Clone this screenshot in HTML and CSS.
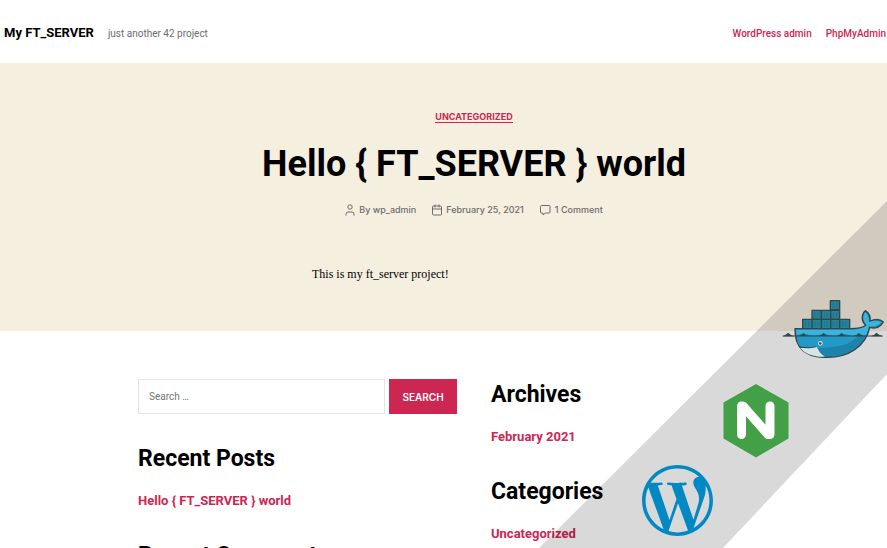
FILE: index.html
```html
<!DOCTYPE html>
<html lang="en">
<head>
<meta charset="utf-8">
<meta name="viewport" content="width=device-width, initial-scale=1">
<title>My FT_SERVER</title>
<link rel="stylesheet" href="styles.css">
</head>
<body>
<header class="site-header">
  <div class="brand">
    <a class="brand-name" href="#">My FT_SERVER</a>
    <span class="tagline">just another 42 project</span>
  </div>
  <nav class="site-nav">
    <a href="#">WordPress admin</a>
    <a href="#">PhpMyAdmin</a>
  </nav>
</header>
<main>
  <article class="post">
    <a class="category" href="#">UNCATEGORIZED</a>
    <h1>Hello { FT_SERVER } world</h1>
    <ul class="meta">
      <li><svg width="10" height="12" viewBox="0 0 10 12" aria-hidden="true"><circle cx="5" cy="3" r="2.2"/><path d="M1 11.5V10a2 2 0 0 1 2-2h4a2 2 0 0 1 2 2v1.500"/></svg>By wp_admin</li>
      <li><svg width="10" height="12" viewBox="0 0 10 12" aria-hidden="true"><rect x=".5" y="2" width="9" height="9" rx="1"/><path d="M.5 5h9M3 .5v3M7 .5v3"/></svg>February 25, 2021</li>
      <li><svg width="11" height="12" viewBox="0 0 11 12" aria-hidden="true"><path d="M1.500 1.500h7.500a1 1 0 0 1 1 1v5.500a1 1 0 0 1-1 1H5.500L3 11V9H1.500a1 1 0 0 1-1-1V2.500a1 1 0 0 1 1-1z"/></svg>1 Comment</li>
    </ul>
    <p class="post-text">This is my ft_server project!</p>
  </article>
  <div class="widgets">
    <div class="column">
      <form class="search">
        <input type="search" aria-label="Search" placeholder="Search …">
        <button type="submit">SEARCH</button>
      </form>
      <section>
        <h2>Recent Posts</h2>
        <a href="#">Hello { FT_SERVER } world</a>
      </section>
      <section>
        <h2>Recent Comments</h2>
      </section>
    </div>
    <div class="column">
      <section>
        <h2>Archives</h2>
        <a href="#">February 2021</a>
      </section>
      <section>
        <h2>Categories</h2>
        <a href="#">Uncategorized</a>
      </section>
    </div>
  </div>
</main>
<svg class="ribbon" width="348" height="347" viewBox="0 0 348 347" aria-hidden="true">
  <path d="M348 0V173L184 347H0z" fill="#000" fill-opacity=".15"/>
  <svg x="231" y="84" width="117" height="90" viewBox="0 0 351 270">
    <g stroke="#364548" stroke-width="4" stroke-linejoin="round">
      <path fill="#248299" d="M181 47h28v28h-28zM126 76h83v27h-83zM98 103h141v29H98z"/>
      <path fill="none" d="M181 75h28M126 103h83M126 103v28M154 76v55M182 76v55M209 103v28"/>
      <path stroke="#1d6f84" stroke-width="2" fill="none" d="M190 53v17M200 53v17M135 82v16M144 82v16M163 82v16M172 82v16M190 82v16M200 82v16M107 109v17M116 109v17M135 109v17M144 109v17M163 109v17M172 109v17M190 109v17M200 109v17M218 109v17M228 109v17"/>
      <path fill="#1c83aa" d="M75 131H240C264 131 279 128 287 121C273 107 274 88 286 77C297 84 302 96 300 108C315 102 330 102 340 111C332 127 315 132 299 127C294 155 278 178 253 195C228 212 195 219 160 217C105 214 74 187 75 131z"/>
    </g>
    <path fill="#3ab3dd" d="M78 134H245C268 133 282 129 290 121C277 106 278 91 286 81C294 88 298 98 297 112C312 106 326 106 335 112C326 123 310 127 297 123C294 134 292 143 287 151C276 153 271 145 266 145C258 151 248 154 240 151L215 145C199 155 182 153 161 145C140 155 120 152 101 145L80 151z"/>
    <path fill="#2498c6" d="M80 153H264C245 177 207 187 151 189L89 184Q81 171 80 153z"/>
    <path fill="#d5e7e5" d="M90 188C109 190 126 190 140 184C145 198 153 209 165 215C132 216 105 207 90 188z"/>
    <path fill="none" stroke="#364548" stroke-width="3" d="M38 153H338M88 187Q120 191 140 185"/>
    <path fill="#364548" d="M38 154Q50 148 54 143Q62 151 74 154zM88 153Q99 149 101 144Q105 151 114 153zM148 153Q158 149 161 144Q165 151 175 153zM202 153Q212 149 214 144Q219 151 228 153zM252 153Q263 150 266 144Q270 151 281 153zM302 154Q315 149 319 143Q328 151 340 154z"/>
    <circle cx="151" cy="175" r="7" fill="#d5e7e5"/>
    <circle cx="151" cy="175" r="4" fill="#364548"/>
    <circle cx="153" cy="173" r="1.500" fill="#fff"/>
  </svg>
  <path fill="#43a047" d="M217 183l32.500 18.500v36L217 256.500l-32.500-19v-36z"/>
  <path fill="none" stroke="#fff" stroke-width="9" stroke-linecap="round" stroke-linejoin="round" d="M202.500 233.500v-28.500h1.500L229 233.500h2v-28.500"/>
  <svg x="103" y="264" width="71" height="71" viewBox="0 0 24 24">
    <path fill="#0288c3" d="M21.469 6.825c.84 1.537 1.318 3.3 1.318 5.175 0 3.979-2.156 7.456-5.363 9.325l3.295-9.527c.615-1.54.82-2.771.82-3.864 0-.405-.026-.78-.07-1.11m-7.981.105c.647-.03 1.232-.105 1.232-.105.582-.075.514-.93-.067-.899 0 0-1.755.135-2.88.135-1.064 0-2.85-.15-2.85-.15-.585-.03-.661.855-.075.885 0 0 .54.061 1.125.09l1.68 4.605-2.37 7.08L5.354 6.9c.649-.03 1.234-.1 1.234-.1.585-.075.516-.93-.065-.896 0 0-1.746.138-2.874.138-.2 0-.438-.008-.69-.015C4.911 3.15 8.235 1.215 12 1.215c2.809 0 5.365 1.072 7.286 2.833-.046-.003-.091-.009-.141-.009-1.06 0-1.812.923-1.812 1.914 0 .89.513 1.643 1.06 2.531.411.72.89 1.643.89 2.977 0 .915-.354 1.994-.821 3.479l-1.075 3.585-3.9-11.61.001.014zM12 22.784c-1.059 0-2.081-.153-3.048-.437l3.237-9.406 3.315 9.087c.024.053.05.101.078.149-1.12.393-2.325.609-3.582.609M1.211 12c0-1.564.336-3.05.935-4.39L7.29 21.709C3.694 19.96 1.212 16.271 1.211 12M12 0C5.385 0 0 5.385 0 12s5.385 12 12 12 12-5.385 12-12S18.615 0 12 0"/>
  </svg>
</svg>
</body>
</html>
```
FILE: styles.css
```css
* { box-sizing: border-box; }

body {
  margin: 0;
  position: relative;
  height: 100vh;
  overflow: hidden;
  background: #fff;
  color: #000;
  font-family: Roboto, "Liberation Sans", sans-serif;
}

a { color: #cd2653; text-decoration: none; }

h1, h2, p, ul { margin: 0; padding: 0; }

.site-header {
  display: flex;
  justify-content: space-between;
  align-items: center;
  padding: 23px 1px 19px 4px;
  line-height: 20px;
}

.brand, .site-nav { display: flex; align-items: baseline; gap: 14px; }

.brand-name { color: #000; font-size: 13px; font-weight: 700; }

.tagline { color: #6d6d6d; font-size: 10px; }

.site-nav { font-size: 10px; font-weight: 500; }

.post {
  display: flex;
  flex-direction: column;
  align-items: center;
  padding: 48px 0 48px 61px;
  background: #f5efe0;
}

.category {
  border-bottom: 1px solid #cd2653;
  font-family: Inter, sans-serif;
  font-size: 9px;
  font-weight: 700;
  line-height: 11px;
}

h1 {
  margin-top: 17px;
  font-size: 36px;
  font-weight: 700;
  line-height: 48px;
}

.meta {
  display: flex;
  gap: 16px;
  margin-top: 15px;
  color: #6d6d6d;
  font-family: Inter, sans-serif;
  font-size: 9px;
  font-weight: 500;
  line-height: 14px;
  list-style: none;
}

.meta li { display: flex; align-items: center; gap: 4px; }

.meta svg { fill: none; stroke: #6d6d6d; }

.post-text {
  width: 100%;
  max-width: 324px;
  margin-top: 48px;
  font-family: "Liberation Serif", serif;
  font-size: 12px;
  line-height: 18px;
}

.widgets {
  display: grid;
  grid-template-columns: 1fr 1fr;
  gap: 34px;
  max-width: 733px;
  margin: 0 auto;
  padding: 48px 0 0 61px;
}

.column { display: flex; flex-direction: column; gap: 29px; }

.search { display: flex; gap: 4px; }

.search input {
  flex: 1;
  min-width: 0;
  height: 35px;
  padding: 0 10px;
  border: 1px solid #e4e4e4;
  border-radius: 0;
  background: #fff;
  font: 10px Roboto, sans-serif;
}

.search input::placeholder { color: #757575; }

.search button {
  width: 68px;
  border: 0;
  padding: 0;
  background: #cd2653;
  color: #fff;
  font: 600 10px Inter, sans-serif;
}

h2 {
  margin-bottom: 16px;
  font-size: 23px;
  font-weight: 700;
  line-height: 32px;
}

section a {
  display: block;
  font-size: 13px;
  font-weight: 700;
  line-height: 20px;
}

.ribbon {
  position: absolute;
  right: 0;
  bottom: 0;
  pointer-events: none;
}
```
